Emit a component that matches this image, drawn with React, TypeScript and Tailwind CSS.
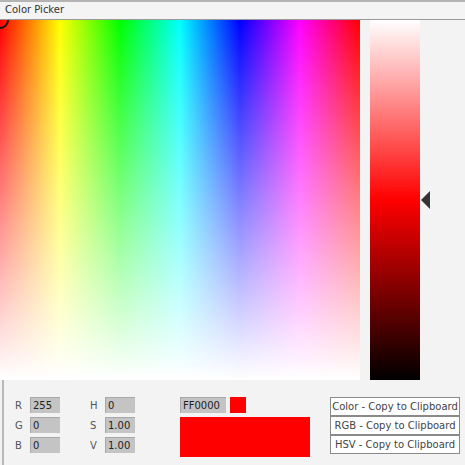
import React from 'react';

const Field = ({ label, value }: { label: string; value: string }) => (
  <div className="flex items-center h-[16px]">
    <span className="w-[15px] text-[10px] text-[#555]">{label}</span>
    <div className="w-[30px] h-[16px] bg-[#c4c4c4] border-t border-l border-[#a8a8a8] pl-[2px] text-[10px] leading-[15px] text-[#222]">
      {value}
    </div>
  </div>
);

const CopyButton = ({ children }: { children: React.ReactNode }) => (
  <button className="w-[130px] h-[19px] bg-white border border-[#8a8a8a] text-[10px] leading-[17px] text-[#444] text-center">
    {children}
  </button>
);

const App = () => {
  return (
    <div
      className="w-[465px] h-[465px] bg-[#f3f3f3] flex flex-col overflow-hidden"
      style={{ fontFamily: '"DejaVu Sans", "Liberation Sans", sans-serif' }}
    >
      {/* Title bar */}
      <div className="h-[20px] border-t-2 border-b border-t-[#b4b4b4] border-b-[#9a9a9a] bg-[#f4f4f4] pl-[5px] text-[10px] leading-[16px] text-[#333]">
        Color Picker
      </div>

      {/* Picker area */}
      <div className="flex h-[360px]">
        <div className="relative w-[360px] h-[360px] overflow-hidden bg-[linear-gradient(to_right,#ff0000,#ffff00,#00ff00,#00ffff,#0000ff,#ff00ff,#ff0000)]">
          <div className="absolute inset-0 bg-[linear-gradient(to_bottom,rgba(255,255,255,0),#ffffff)]" />
          <div className="absolute -left-[9px] -top-[9px] w-[18px] h-[18px] rounded-full border-2 border-[#111]" />
        </div>
        <div className="ml-[10px] w-[50px] h-[360px] bg-[linear-gradient(to_bottom,#ffffff,#ff0000_50%,#000000)]" />
        <div className="relative w-[45px]">
          <div className="absolute left-[1px] top-[171px] w-0 h-0 border-y-[9px] border-y-transparent border-r-[9px] border-r-[#333]" />
        </div>
      </div>

      {/* Bottom panel */}
      <div className="flex-1 ml-[2px] border-l-2 border-[#b8b8b8] flex pt-[17px]">
        <div className="ml-[11px] flex flex-col gap-[4px]">
          <Field label="R" value="255" />
          <Field label="G" value="0" />
          <Field label="B" value="0" />
        </div>
        <div className="ml-[30px] flex flex-col gap-[4px]">
          <Field label="H" value="0" />
          <Field label="S" value="1.00" />
          <Field label="V" value="1.00" />
        </div>
        <div className="ml-[45px] flex flex-col gap-[4px]">
          <div className="flex gap-[4px]">
            <div className="w-[46px] h-[16px] bg-[#c4c4c4] border-t border-l border-[#a8a8a8] pl-[2px] text-[10px] leading-[15px] text-[#222]">
              FF0000
            </div>
            <div className="w-[16px] h-[16px] bg-[#ff0000]" />
          </div>
          <div className="w-[130px] h-[40px] bg-[#ff0000]" />
        </div>
        <div className="ml-[20px] flex flex-col">
          <CopyButton>Color - Copy to Clipboard</CopyButton>
          <CopyButton>RGB - Copy to Clipboard</CopyButton>
          <CopyButton>HSV - Copy to Clipboard</CopyButton>
        </div>
      </div>
    </div>
  );
};

export default App;
